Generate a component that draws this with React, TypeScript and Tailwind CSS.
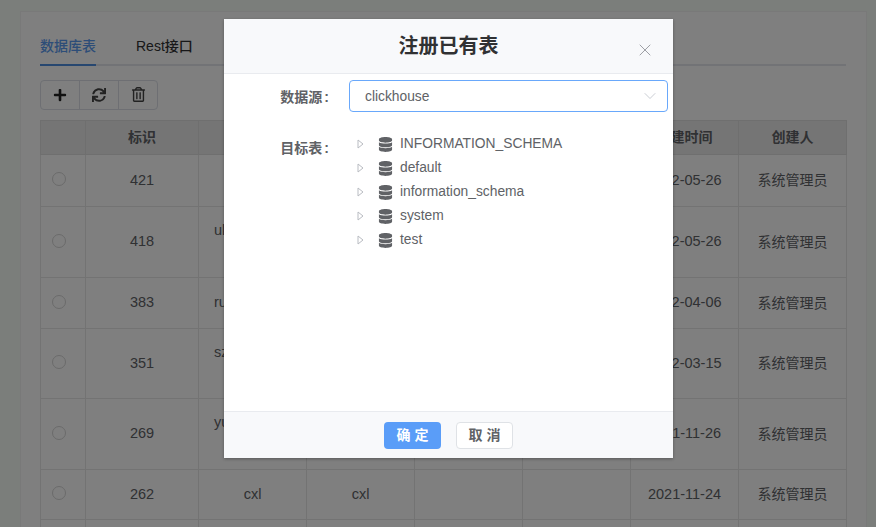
import { FaPlus, FaSync, FaRegTrashAlt, FaDatabase } from 'react-icons/fa';
import { ChevronDown, X } from 'lucide-react';

const font = "font-['Liberation_Sans','Noto_Sans_CJK_SC',sans-serif]";

// left: name cell text sits on the first of two lines, the rest is behind the dialog
const rows = [
  { id: '421', h: 'h-[52px]', date: '2022-05-26', name: '', dept: '' },
  { id: '418', h: 'h-[71px]', date: '2022-05-26', name: 'uk', two: true, dept: '' },
  { id: '383', h: 'h-[51px]', date: '2022-04-06', name: 'ru', dept: '' },
  { id: '351', h: 'h-[70px]', date: '2022-03-15', name: 'sz', two: true, dept: '' },
  { id: '269', h: 'h-[71px]', date: '2021-11-26', name: 'yu', two: true, dept: '' },
  { id: '262', h: 'h-[50px]', date: '2021-11-24', name: 'cxl', center: true, dept: 'cxl' },
];

const treeItems = ['INFORMATION_SCHEMA', 'default', 'information_schema', 'system', 'test'];

const DataTable = () => (
  <table className="w-[806px] table-fixed border-collapse text-[14.5px] text-[#606266]">
    <colgroup>
      <col className="w-[45px]" />
      <col className="w-[113px]" />
      <col className="w-[108px]" />
      <col className="w-[108px]" />
      <col className="w-[108px]" />
      <col className="w-[108px]" />
      <col className="w-[108px]" />
      <col className="w-[108px]" />
    </colgroup>
    <thead>
      <tr className="h-[34px] bg-[#ebebeb] text-[14px] text-[#606266]">
        <th className="border border-[#dedede]"></th>
        <th className="border border-[#dedede] font-bold">标识</th>
        <th className="border border-[#dedede]"></th>
        <th className="border border-[#dedede]"></th>
        <th className="border border-[#dedede]"></th>
        <th className="border border-[#dedede]"></th>
        <th className="border border-[#dedede] font-bold">创建时间</th>
        <th className="border border-[#dedede] font-bold">创建人</th>
      </tr>
    </thead>
    <tbody>
      {rows.map((row) => (
        <tr key={row.id} className={row.h}>
          <td className="border border-[#e6e6e6] pl-[11px]">
            <span className="mb-[3px] block size-[14px] rounded-full border border-[#d4d4d4]" />
          </td>
          <td className="border border-[#e6e6e6] text-center">{row.id}</td>
          <td className={`border border-[#e6e6e6] ${row.center ? 'text-center' : 'pl-[15px]'}`}>
            {row.name}
            {row.two && <br />}
            {row.two && <span>&nbsp;</span>}
          </td>
          <td className="border border-[#e6e6e6] text-center">{row.dept}</td>
          <td className="border border-[#e6e6e6]"></td>
          <td className="border border-[#e6e6e6]"></td>
          <td className="border border-[#e6e6e6] text-center">{row.date}</td>
          <td className="border border-[#e6e6e6] text-center text-[14px]">系统管理员</td>
        </tr>
      ))}
      <tr className="h-[40px]">
        {Array.from({ length: 8 }).map((_, i) => (
          <td key={i} className="border border-[#e6e6e6]"></td>
        ))}
      </tr>
    </tbody>
  </table>
);

const RegisterDialog = () => (
  <div className="absolute top-[19px] left-[224px] flex h-[439px] w-[449px] flex-col bg-white shadow-[0_1px_3px_rgba(0,0,0,0.3)]">
    <div className="relative flex h-[55px] shrink-0 items-center justify-center border-b border-[#e9ebef] bg-[#f8f9fb]">
      <h2 className="text-[20px] font-bold text-[#303133]">注册已有表</h2>
      <X className="absolute top-[21px] left-[411px] size-[20px] text-[#8b8e94]" strokeWidth={1} />
    </div>
    <div className="flex grow flex-col pt-[6px] text-[13.8px] text-[#606266]">
      <div className="flex items-center">
        <label className="w-[105px] pt-[2px] text-right text-[14px] font-bold">
          数据源<span className="ml-[2px]">:</span>
        </label>
        <div className="ml-[20px] flex h-[32px] w-[319px] items-center justify-between rounded-[4px] border border-[#69a8fb] pr-[7px] pl-[15px]">
          <span className="pt-[2px]">clickhouse</span>
          <ChevronDown className="size-[20px] text-[#bfc3cb]" strokeWidth={1} />
        </div>
      </div>
      <div className="mt-[20px] flex items-start">
        <label className="mt-[6px] w-[105px] text-right text-[14px] font-bold">
          目标表<span className="ml-[2px]">:</span>
        </label>
        <ul className="ml-[20px]">
          {treeItems.map((item) => (
            <li key={item} className="flex h-[24px] items-center">
              <svg viewBox="0 0 7 10" className="ml-[8px] h-[10px] w-[7px]">
                <path d="M1 1 L6 5 L1 9 Z" fill="none" stroke="#b9bcc2" strokeWidth="1" />
              </svg>
              <FaDatabase className="ml-[14px] size-[15px] text-[#606266]" />
              <span className="ml-[7px] pt-[1px]">{item}</span>
            </li>
          ))}
        </ul>
      </div>
    </div>
    <div className="flex h-[47px] shrink-0 items-center justify-center gap-[15px] border-t border-[#e9ebef] bg-[#f8f9fb]">
      <button className="h-[27px] w-[57px] rounded-[4px] bg-[#5a9df8] text-[14px] font-bold text-white">确 定</button>
      <button className="h-[27px] w-[57px] rounded-[4px] border border-[#dfe2e6] bg-white text-[14px] font-bold text-[#606266]">取 消</button>
    </div>
  </div>
);

const App = () => {
  return (
    <div className={`relative h-[527px] w-[876px] overflow-hidden bg-[#f6fcf6] pt-[11px] pl-[20px] ${font}`}>
      <div className="h-[600px] w-[847px] border border-[#f2f2f2] bg-white pt-[20px] pl-[19px]">
        <div className="flex h-[34px] w-[806px] border-b-2 border-[#e4e7ed] text-[14px]">
          <div className="-mb-[2px] h-[34px] w-[56px] border-b-2 border-[#4f8fe0] pt-[4px] font-medium whitespace-nowrap text-[#5b9bf0]">数据库表</div>
          <div className="ml-[40px] pt-[4px] font-medium whitespace-nowrap text-[#303133]">Rest接口</div>
        </div>
        <div className="mt-[14px] flex h-[30px] w-[118px] rounded-[4px] border border-[#dcdfe6]">
          <div className="flex w-[39px] items-center justify-center border-r border-[#dcdfe6] pb-[1px]">
            <FaPlus className="size-[14px] text-[#222]" />
          </div>
          <div className="flex w-[39px] items-center justify-center border-r border-[#dcdfe6] pb-[1px]">
            <FaSync className="size-[14px] text-[#444]" />
          </div>
          <div className="flex grow items-center justify-center pb-[1px]">
            <FaRegTrashAlt className="size-[15px] text-[#444]" />
          </div>
        </div>
        <div className="mt-[10px]">
          <DataTable />
        </div>
      </div>
      <div className="absolute inset-0 bg-black/50" />
      <RegisterDialog />
    </div>
  );
};

export default App;
